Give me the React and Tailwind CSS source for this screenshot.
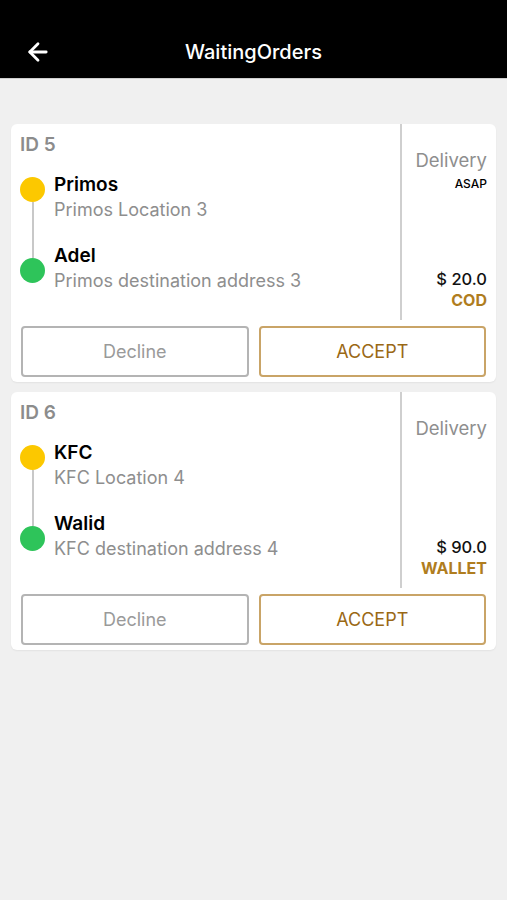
import { ArrowLeft } from "lucide-react";

const orders = [
  {
    id: 5,
    from: "Primos",
    fromAddr: "Primos Location 3",
    to: "Adel",
    toAddr: "Primos destination address 3",
    asap: true,
    price: "$ 20.0",
    pay: "COD",
  },
  {
    id: 6,
    from: "KFC",
    fromAddr: "KFC Location 4",
    to: "Walid",
    toAddr: "KFC destination address 4",
    asap: false,
    price: "$ 90.0",
    pay: "WALLET",
  },
];

function OrderCard({ order }) {
  return (
    <div className="bg-white rounded-[6px] shadow-[0_1px_2px_rgba(0,0,0,0.06)] flex flex-col">
      <div className="flex">
        <div className="flex-1 pl-[9px] pt-[10px] pb-[27px]">
          <div className="text-[19px] leading-[22px] font-semibold text-[#8c8c8c]">ID {order.id}</div>
          <div className="flex mt-[16px]">
            <div className="flex flex-col items-center w-[25px] mt-[5px] mb-[10px]">
              <div className="w-[25px] h-[25px] rounded-full bg-[#fcc800]" />
              <div className="w-[2px] flex-1 bg-[#c8c8c8]" />
              <div className="w-[25px] h-[25px] rounded-full bg-[#2ec45a]" />
            </div>
            <div className="ml-[9px] flex flex-col">
              <div className="text-[19px] leading-[25px] font-semibold text-black">{order.from}</div>
              <div className="text-[18px] leading-[25px] text-[#8e8e8e]">{order.fromAddr}</div>
              <div className="text-[19px] leading-[25px] font-semibold text-black mt-[21px]">{order.to}</div>
              <div className="text-[18px] leading-[25px] text-[#8e8e8e]">{order.toAddr}</div>
            </div>
          </div>
        </div>
        <div className="w-[96px] border-l-2 border-[#cfcfcf] pr-[9px] pt-[24px] pb-[10px] flex flex-col items-end justify-between">
          <div className="flex flex-col items-end">
            <div className="text-[18.5px] leading-[24px] text-[#8e8e8e]">Delivery</div>
            {order.asap && <div className="text-[12px] leading-[16px] font-medium text-black mt-[4px]">ASAP</div>}
          </div>
          <div className="flex flex-col items-end">
            <div className="text-[16.5px] leading-[21px] font-medium text-[#111]">{order.price}</div>
            <div className="text-[16px] leading-[20px] font-bold text-[#b07d1e]">{order.pay}</div>
          </div>
        </div>
      </div>
      <div className="flex gap-[10px] px-[10px] pt-[6px] pb-[5px]">
        <button className="flex-1 h-[51px] border-2 border-[#b4b4b4] rounded-[4px] text-[18px] text-[#9a9a9a]">Decline</button>
        <button className="flex-1 h-[51px] border-2 border-[#c9a467] rounded-[4px] text-[18px] text-[#9a6815]">ACCEPT</button>
      </div>
    </div>
  );
}

export default function App() {
  return (
    <div className="min-h-[900px] bg-[#f0f0f0]" style={{ fontFamily: "Inter, 'Noto Sans', sans-serif" }}>
      <header className="h-[79px] bg-black border-b border-[#cfcfcf] relative flex items-end justify-center pb-[14px]">
        <button className="absolute left-[24px] bottom-[12px] text-white">
          <ArrowLeft size={28} strokeWidth={2.4} />
        </button>
        <h1 className="text-white text-[20px] font-medium leading-[24px]">WaitingOrders</h1>
      </header>
      <main className="px-[11px] pt-[45px] flex flex-col gap-[10px]">
        {orders.map((o) => (
          <OrderCard key={o.id} order={o} />
        ))}
      </main>
    </div>
  );
}
